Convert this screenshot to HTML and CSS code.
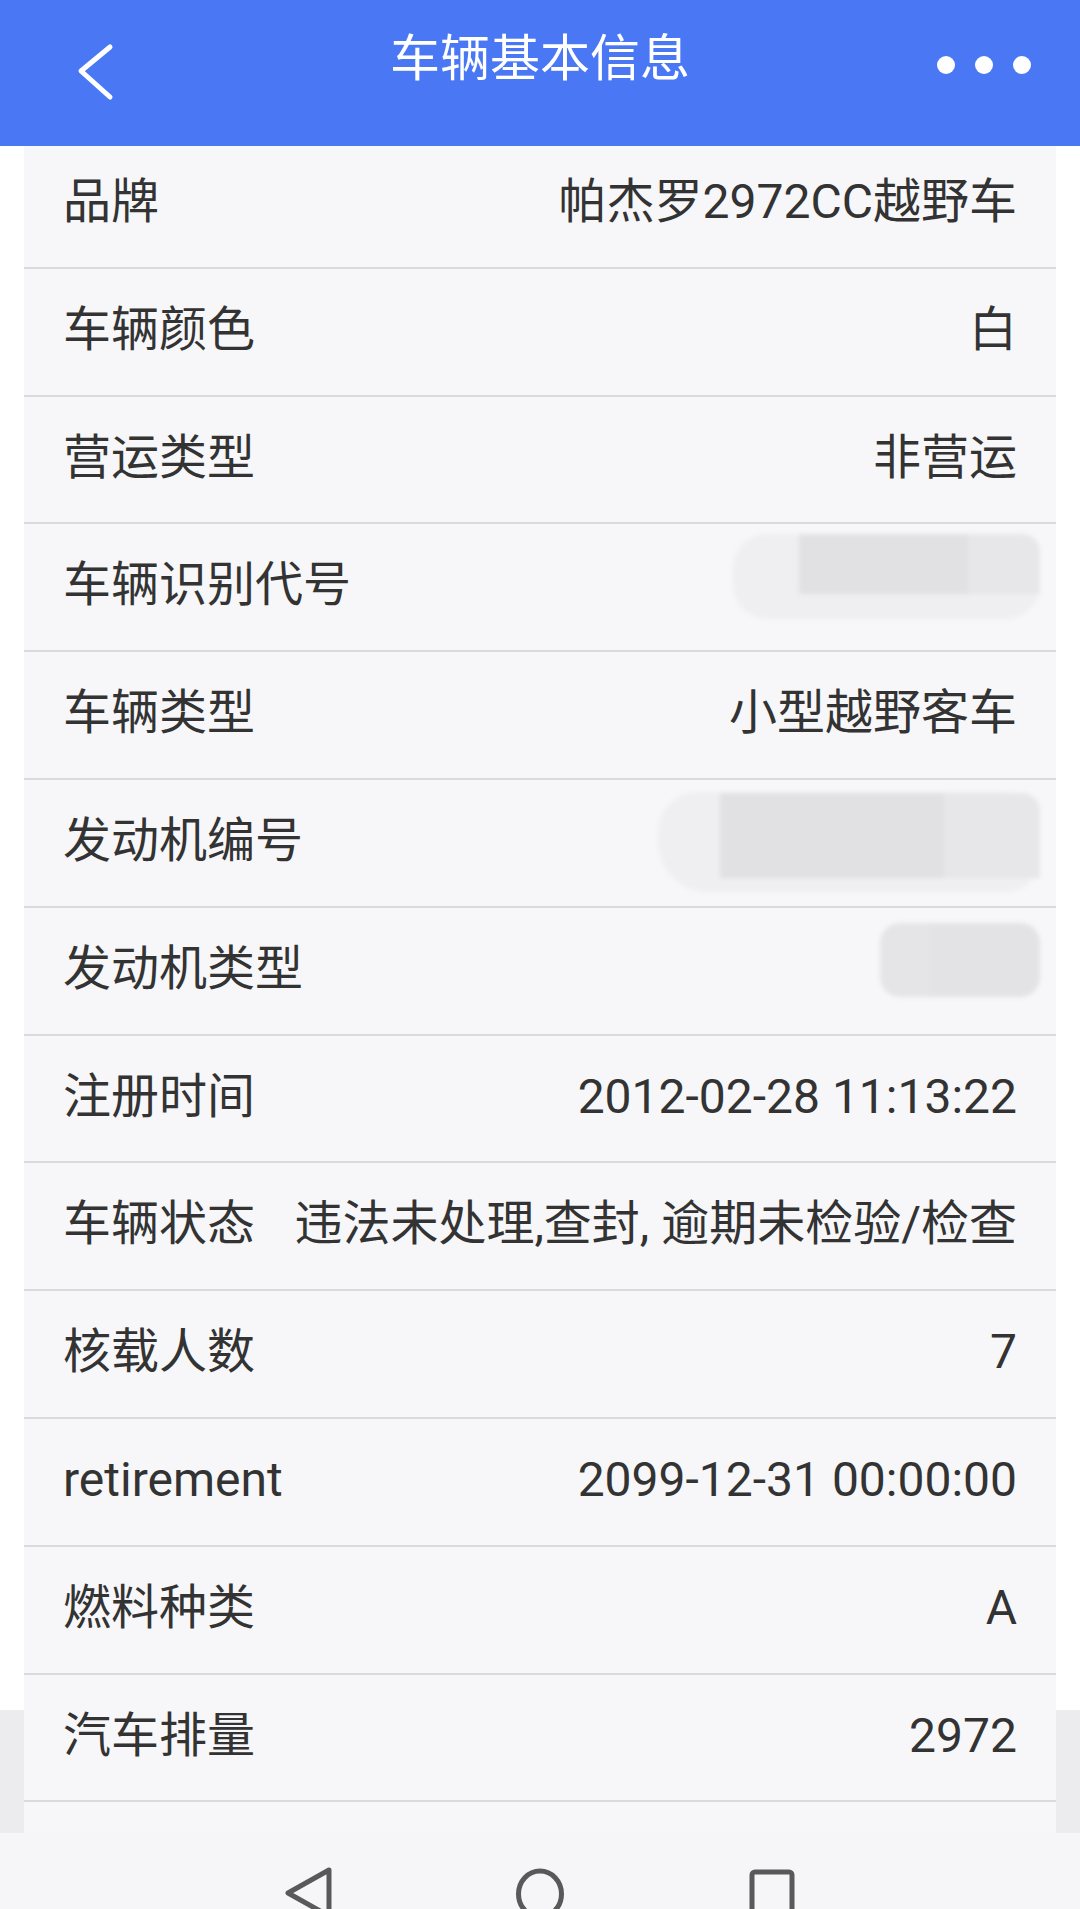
FILE: index.html
```html
<!DOCTYPE html>
<html lang="zh-CN">
<head>
    <meta charset="UTF-8">
    <meta name="viewport" content="width=device-width, initial-scale=1.0">
    <title>车辆基本信息</title>
    <link rel="stylesheet" href="styles.css">
</head>
<body>
    <header class="top-bar">
        <a class="back-btn">
            <svg width="42" height="60" viewBox="0 0 42 60">
                <path d="M36 5 L7 29 L36 55" fill="none" stroke="#fff" stroke-width="5" stroke-linecap="round" stroke-linejoin="round"/>
            </svg>
        </a>
        <h1 class="page-title">车辆基本信息</h1>
        <div class="more-btn">
            <span class="dot"></span>
            <span class="dot"></span>
            <span class="dot"></span>
        </div>
    </header>

    <ul class="info-list">
        <li class="info-row"><span class="label">品牌</span><span class="value">帕杰罗2972CC越野车</span></li>
        <li class="info-row"><span class="label">车辆颜色</span><span class="value">白</span></li>
        <li class="info-row"><span class="label">营运类型</span><span class="value">非营运</span></li>
        <li class="info-row">
            <span class="label">车辆识别代号</span>
            <span class="mask mask-vin"><i class="mask-core"></i></span>
        </li>
        <li class="info-row"><span class="label">车辆类型</span><span class="value">小型越野客车</span></li>
        <li class="info-row">
            <span class="label">发动机编号</span>
            <span class="mask mask-engine"><i class="mask-core"></i></span>
        </li>
        <li class="info-row">
            <span class="label">发动机类型</span>
            <span class="mask mask-type"><i class="mask-core"></i></span>
        </li>
        <li class="info-row"><span class="label">注册时间</span><span class="value">2012-02-28 11:13:22</span></li>
        <li class="info-row"><span class="label">车辆状态</span><span class="value">违法未处理,查封, 逾期未检验/检查</span></li>
        <li class="info-row"><span class="label">核载人数</span><span class="value">7</span></li>
        <li class="info-row"><span class="label">retirement</span><span class="value">2099-12-31 00:00:00</span></li>
        <li class="info-row"><span class="label">燃料种类</span><span class="value">A</span></li>
        <li class="info-row"><span class="label">汽车排量</span><span class="value">2972</span></li>
        <li class="info-row"></li>
    </ul>

    <!-- 系统导航栏 -->
    <nav class="sys-nav">
        <svg width="52" height="52" viewBox="0 0 52 52">
            <path d="M47 3 L6 26 L47 49 Z" fill="none" stroke="#595959" stroke-width="5" stroke-linejoin="round"/>
        </svg>
        <svg width="52" height="52" viewBox="0 0 52 52">
            <ellipse cx="26" cy="27" rx="21.5" ry="23" fill="none" stroke="#595959" stroke-width="5"/>
        </svg>
        <svg width="52" height="52" viewBox="0 0 52 52">
            <rect x="6" y="5" width="40" height="44" rx="3" fill="none" stroke="#595959" stroke-width="5"/>
        </svg>
    </nav>
</body>
</html>
```

FILE: styles.css
```css
* {
    margin: 0;
    padding: 0;
    box-sizing: border-box;
}

html, body {
    height: 100%;
    overflow: hidden;
}

body {
    font-family: Roboto, "Noto Sans CJK SC", sans-serif;
    color: #333;
    background: linear-gradient(to bottom, #fff 1710px, #ececef 1710px);
}

.top-bar {
    position: relative;
    z-index: 2;
    display: grid;
    grid-template-columns: 1fr auto 1fr;
    align-items: start;
    height: 146px;
    background: #4a78f5;
    color: #fff;
}

.back-btn {
    display: block;
    margin: 42px 0 0 74px;
    width: 42px;
    height: 60px;
}

.back-btn svg {
    display: block;
}

.page-title {
    padding-top: 29px;
    font-family: "Noto Sans CJK SC", sans-serif;
    font-size: 50px;
    font-weight: normal;
    line-height: 50px;
    text-align: center;
}

.more-btn {
    display: flex;
    justify-content: flex-end;
    gap: 20px;
    margin: 56px 49px 0 0;
}

.dot {
    width: 18px;
    height: 18px;
    border-radius: 50%;
    background: #fff;
}

.info-list {
    list-style: none;
    margin: -5px 24px 0;
}

.info-row {
    position: relative;
    display: flex;
    align-items: center;
    justify-content: space-between;
    height: 127.8px;
    padding: 0 39px 4px;
    background: #f7f7f9;
    border-bottom: 2px solid #d8dbde;
    font-size: 48px;
    white-space: nowrap;
}

.label,
.value {
    line-height: 1.2;
}

/* 打码区域 */
.mask {
    position: absolute;
    right: 16px;
    background: #efeff2;
    border-radius: 34px;
    filter: blur(2px);
}

.mask-core {
    position: absolute;
    top: 0;
    right: 0;
    background: linear-gradient(to right, #e1e1e4 0%, #e1e1e4 70%, #e7e7ea 70%);
    border-radius: 0 18px 0 0;
}

.mask-vin {
    top: 10px;
    width: 307px;
    height: 85px;
}

.mask-vin .mask-core {
    width: 241px;
    height: 60px;
}

.mask-engine {
    top: 12px;
    width: 382px;
    height: 100px;
    border-radius: 40px 34px 34px 50px;
}

.mask-engine .mask-core {
    top: 1px;
    width: 320px;
    height: 85px;
}

.mask-type {
    top: 15px;
    width: 160px;
    height: 74px;
    border-radius: 20px;
    background: #e5e5e8;
}

.mask-type .mask-core {
    width: 110px;
    height: 74px;
    background: #e3e3e6;
    border-radius: 0 20px 20px 0;
}

.sys-nav {
    position: fixed;
    left: 0;
    right: 0;
    bottom: 0;
    z-index: 3;
    display: flex;
    justify-content: center;
    gap: 180px;
    height: 76px;
    padding-top: 34px;
    background: #f6f6f8;
    overflow: hidden;
}

.sys-nav svg {
    flex: none;
    display: block;
}
```
